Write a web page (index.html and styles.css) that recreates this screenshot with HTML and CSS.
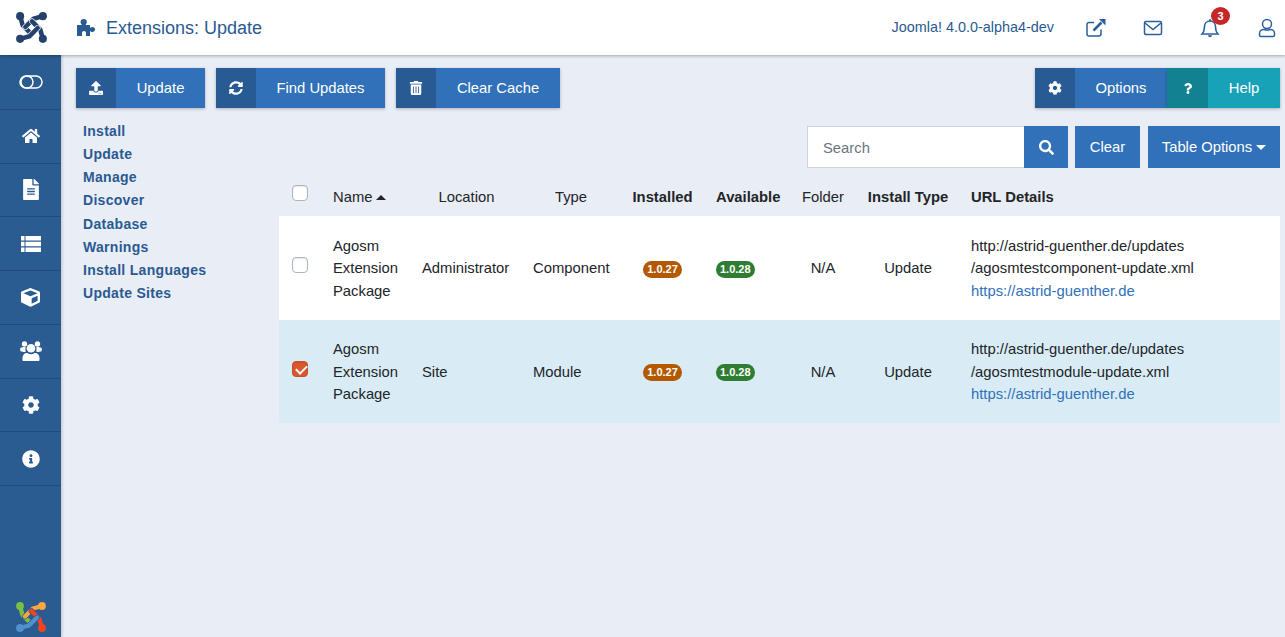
FILE: index.html
```html
<!DOCTYPE html>
<html lang="en">
<head>
    <meta charset="UTF-8">
    <title>Extensions: Update</title>
    <link rel="stylesheet" href="styles.css">
</head>
<body>
    <svg class="sprite" aria-hidden="true">
        <symbol id="i-home" viewBox="0 0 576 512"><path d="M280.37 148.26L96 300.11V464a16 16 0 0 0 16 16l112.06-.29a16 16 0 0 0 15.92-16V368a16 16 0 0 1 16-16h64a16 16 0 0 1 16 16v95.64a16 16 0 0 0 16 16.05L464 480a16 16 0 0 0 16-16V300L295.67 148.26a12.19 12.19 0 0 0-15.3 0zM571.6 251.47L488 182.56V44.05a12 12 0 0 0-12-12h-56a12 12 0 0 0-12 12v72.61L318.47 43a48 48 0 0 0-61 0L4.34 251.47a12 12 0 0 0-1.6 16.9l25.5 31A12 12 0 0 0 45.15 301l235.22-193.74a12.19 12.19 0 0 1 15.3 0L530.9 301a12 12 0 0 0 16.9-1.6l25.5-31a12 12 0 0 0-1.7-16.93z"/></symbol>
        <symbol id="i-file" viewBox="0 0 384 512"><path d="M224 136V0H24C10.7 0 0 10.7 0 24v464c0 13.3 10.7 24 24 24h336c13.3 0 24-10.7 24-24V160H248c-13.2 0-24-10.8-24-24zm64 236c0 6.6-5.4 12-12 12H108c-6.6 0-12-5.4-12-12v-8c0-6.6 5.4-12 12-12h168c6.6 0 12 5.4 12 12v8zm0-64c0 6.6-5.4 12-12 12H108c-6.6 0-12-5.4-12-12v-8c0-6.6 5.4-12 12-12h168c6.6 0 12 5.4 12 12v8zm0-72v8c0 6.6-5.4 12-12 12H108c-6.6 0-12-5.4-12-12v-8c0-6.6 5.4-12 12-12h168c6.6 0 12 5.4 12 12zm96-114.1v6.1H256V0h6.1c6.4 0 12.5 2.5 17 7l97.9 98c4.5 4.5 7 10.6 7 16.9z"/></symbol>
        <symbol id="i-list" viewBox="0 0 20 16"><path d="M0 0h3.500v4.600H0zM4.500 0H20v4.600H4.500zM0 5.700h3.500v4.600H0zM4.500 5.700H20v4.600H4.500zM0 11.400h3.500V16H0zM4.500 11.400H20V16H4.500z"/></symbol>
        <symbol id="i-cube" viewBox="0 0 512 512"><path d="M239.1 6.3l-208 78c-18.7 7-31.1 25-31.1 45v225.1c0 18.2 10.3 34.8 26.5 42.9l208 104c13.5 6.8 29.4 6.8 42.9 0l208-104c16.3-8.1 26.5-24.8 26.5-42.9V129.3c0-20-12.4-37.9-31.1-44.9l-208-78C262 2.2 250 2.2 239.1 6.3zM256 68.4l192 72v1.1l-192 78-192-78v-1.1l192-72zm32 356V275.5l160-65v133.9l-160 80z"/></symbol>
        <symbol id="i-users" viewBox="0 0 22 20"><circle cx="4.500" cy="3" r="2.700"/><circle cx="17.500" cy="3" r="2.700"/><circle cx="2.300" cy="8.500" r="2.300"/><circle cx="19.700" cy="8.500" r="2.300"/><circle cx="11" cy="7.200" r="4.300"/><path d="M3 6h2.500v5H3zM16.500 6H19v5h-2.500z"/><path d="M3.500 20c-.6 0-1-.4-1-1v-2c0-2.800 2-5 4-5h1c1 .8 2.200 1.200 3.500 1.200s2.500-.4 3.500-1.200h1c2 0 4 2.200 4 5v2c0 .6-.4 1-1 1z"/></symbol>
        <symbol id="i-cog" viewBox="0 0 512 512"><path d="M487.4 315.7l-42.6-24.6c4.3-23.2 4.3-47 0-70.2l42.6-24.6c4.9-2.8 7.1-8.6 5.5-14-11.1-35.6-30-67.8-54.7-94.6-3.8-4.1-10-5.1-14.8-2.3L380.8 110c-17.9-15.4-38.5-27.3-60.8-35.1V25.8c0-5.6-3.9-10.5-9.4-11.7-36.7-8.2-74.3-7.8-109.2 0-5.5 1.2-9.4 6.1-9.4 11.7V75c-22.2 7.9-42.8 19.8-60.8 35.1L88.7 85.5c-4.9-2.8-11-1.9-14.8 2.3-24.7 26.7-43.6 58.9-54.7 94.6-1.7 5.4.6 11.2 5.5 14L67.3 221c-4.3 23.2-4.3 47 0 70.2l-42.6 24.6c-4.9 2.8-7.1 8.6-5.5 14 11.1 35.6 30 67.8 54.7 94.6 3.8 4.1 10 5.1 14.8 2.3l42.6-24.6c17.9 15.4 38.5 27.3 60.8 35.1v49.2c0 5.6 3.9 10.5 9.4 11.7 36.7 8.2 74.3 7.8 109.2 0 5.5-1.2 9.4-6.1 9.4-11.7v-49.2c22.2-7.9 42.8-19.8 60.8-35.1l42.6 24.6c4.9 2.8 11 1.9 14.8-2.3 24.7-26.7 43.6-58.9 54.7-94.6 1.5-5.5-.7-11.3-5.6-14.1zM256 336c-44.1 0-80-35.9-80-80s35.9-80 80-80 80 35.9 80 80-35.9 80-80 80z"/></symbol>
        <symbol id="i-info" viewBox="0 0 512 512"><path d="M256 8C119.043 8 8 119.083 8 256c0 136.997 111.043 248 248 248s248-111.003 248-248C504 119.083 392.957 8 256 8zm0 110c23.196 0 42 18.804 42 42s-18.804 42-42 42-42-18.804-42-42 18.804-42 42-42zm56 254c0 6.627-5.373 12-12 12h-88c-6.627 0-12-5.373-12-12v-24c0-6.627 5.373-12 12-12h12v-64h-12c-6.627 0-12-5.373-12-12v-24c0-6.627 5.373-12 12-12h64c6.627 0 12 5.373 12 12v100h12c6.627 0 12 5.373 12 12v24z"/></symbol>
        <symbol id="i-search" viewBox="0 0 512 512"><path d="M505 442.7L405.3 343c-4.5-4.5-10.6-7-17-7H372c27.6-35.3 44-79.7 44-128C416 93.1 322.9 0 208 0S0 93.1 0 208s93.1 208 208 208c48.3 0 92.7-16.4 128-44v16.3c0 6.4 2.5 12.5 7 17l99.7 99.7c9.4 9.4 24.6 9.4 33.9 0l28.3-28.3c9.4-9.4 9.4-24.6.1-34zM208 336c-70.7 0-128-57.2-128-128 0-70.7 57.2-128 128-128 70.7 0 128 57.2 128 128 0 70.7-57.2 128-128 128z"/></symbol>
        <symbol id="i-trash" viewBox="0 0 448 512"><path d="M32 464a48 48 0 0 0 48 48h288a48 48 0 0 0 48-48V128H32zm272-256a16 16 0 0 1 32 0v224a16 16 0 0 1-32 0zm-96 0a16 16 0 0 1 32 0v224a16 16 0 0 1-32 0zm-96 0a16 16 0 0 1 32 0v224a16 16 0 0 1-32 0zM432 32H312l-9.4-18.7A24 24 0 0 0 281.1 0H166.8a23.72 23.72 0 0 0-21.4 13.3L136 32H16A16 16 0 0 0 0 48v32a16 16 0 0 0 16 16h416a16 16 0 0 0 16-16V48a16 16 0 0 0-16-16z"/></symbol>
        <symbol id="i-sync" viewBox="0 0 512 512"><path d="M370.72 133.28C339.458 104.008 298.888 87.962 255.848 88c-77.458.068-144.328 53.178-162.791 126.85-1.344 5.363-6.122 9.15-11.651 9.15H24.103c-7.498 0-13.194-6.807-11.807-14.176C33.933 94.924 134.813 8 256 8c66.448 0 126.791 26.136 171.315 68.685L463.03 40.97C478.149 25.851 504 36.559 504 57.941V192c0 13.255-10.745 24-24 24H345.941c-21.382 0-32.09-25.851-16.971-40.971l41.75-41.749zM32 296h134.059c21.382 0 32.09 25.851 16.971 40.971l-41.75 41.75c31.262 29.273 71.835 45.319 114.876 45.28 77.418-.07 144.315-53.144 162.787-126.849 1.344-5.363 6.122-9.15 11.651-9.15h57.304c7.498 0 13.194 6.807 11.807 14.176C478.067 417.076 377.187 504 256 504c-66.448 0-126.791-26.136-171.315-68.685L48.97 471.03C33.851 486.149 8 475.441 8 454.059V320c0-13.255 10.745-24 24-24z"/></symbol>
        <symbol id="i-upload" viewBox="0 0 512 512"><path d="M296 384h-80c-13.3 0-24-10.7-24-24V192h-87.7c-17.8 0-26.7-21.5-14.1-34.1L242.3 5.7c7.5-7.5 19.8-7.5 27.3 0l152.2 152.2c12.6 12.6 3.7 34.1-14.1 34.1H320v168c0 13.3-10.7 24-24 24zm216-8v112c0 13.3-10.7 24-24 24H24c-13.3 0-24-10.7-24-24V376c0-13.3 10.7-24 24-24h136v8c0 30.9 25.1 56 56 56h80c30.9 0 56-25.1 56-56v-8h136c13.3 0 24 10.7 24 24zm-124 88c0-11-9-20-20-20s-20 9-20 20 9 20 20 20 20-9 20-20zm64 0c0-11-9-20-20-20s-20 9-20 20 9 20 20 20 20-9 20-20z"/></symbol>
        <symbol id="i-puzzle" viewBox="0 0 18 17"><path d="M0 6h4.200c.5 0 .6-.4.3-.8C3.900 4.500 3.500 3.900 3.500 3c0-1.700 1.400-3 3.200-3s3.200 1.300 3.200 3c0 .9-.4 1.500-1 2.200-.3.400-.2.800.3.800H13v2.300c0 .5.400.6.800.3.500-.4 1-.6 1.600-.6 1.400 0 2.600 1.100 2.600 2.500s-1.200 2.500-2.600 2.500c-.6 0-1.100-.2-1.600-.6-.4-.3-.8-.2-.8.3V17H9v-3c0-1.100-.9-2-2-2s-2 .9-2 2v3H0z"/></symbol>
        <symbol id="i-question" viewBox="0 0 384 512"><path d="M202.021 0C122.202 0 70.503 32.703 29.914 91.026c-7.363 10.58-5.093 25.086 5.178 32.874l43.138 32.709c10.373 7.865 25.132 6.026 33.253-4.148 25.049-31.381 43.63-49.449 82.757-49.449 30.764 0 68.816 19.799 68.816 49.631 0 22.552-18.617 34.134-48.993 51.164-35.423 19.86-82.299 44.576-82.299 106.405V320c0 13.255 10.745 24 24 24h72.471c13.255 0 24-10.745 24-24v-5.773c0-42.86 125.268-44.645 125.268-160.627C377.504 66.256 286.902 0 202.021 0zM192 373.459c-38.196 0-69.271 31.075-69.271 69.271 0 38.195 31.075 69.27 69.271 69.27s69.271-31.075 69.271-69.271-31.075-69.27-69.271-69.27z"/></symbol>
        <symbol id="i-joomla" viewBox="0 0 30 30">
            <g fill="none" stroke-linecap="round" stroke-linejoin="round">
                <path class="j-gap" d="M4 4l2.500 9 8 8"/>
                <path class="j-a" d="M4 4l2.500 9 8 8"/>
                <path class="j-gap" d="M26 4l-9 2.500-8 8"/>
                <path class="j-b" d="M26 4l-9 2.500-8 8"/>
                <path class="j-gap" d="M26 26l-2.500-9-8-8"/>
                <path class="j-c" d="M26 26l-2.500-9-8-8"/>
                <path class="j-gap" d="M4 26l9-2.500 8-8"/>
                <path class="j-d" d="M4 26l9-2.500 8-8"/>
            </g>
            <circle class="j-a-f" cx="4" cy="4" r="3.900"/>
            <circle class="j-b-f" cx="26" cy="4" r="3.900"/>
            <circle class="j-c-f" cx="26" cy="26" r="3.900"/>
            <circle class="j-d-f" cx="4" cy="26" r="3.900"/>
        </symbol>
    </svg>

    <header class="topbar">
        <a class="brand"><svg class="brand-logo"><use href="#i-joomla"/></svg></a>
        <svg class="title-icon"><use href="#i-puzzle"/></svg>
        <h1 class="page-title">Extensions: Update</h1>
        <div class="top-right">
            <span class="version">Joomla! 4.0.0-alpha4-dev</span>
            <a class="top-link">
                <svg viewBox="0 0 20 20" class="line-icon"><path d="M15 11.500v4.500a2 2 0 0 1-2 2H3a2 2 0 0 1-2-2V6.500a2 2 0 0 1 2-2h5"/><path d="M7.500 12.500L15.500 4.500" stroke-width="2.500"/><path class="solid" d="M13 1h6.500v6.500z"/></svg>
            </a>
            <a class="top-link">
                <svg viewBox="0 0 20 20" class="line-icon"><rect x="1.500" y="3.500" width="17" height="13" rx="1.500"/><path d="M2 5l8 6.500L18 5"/></svg>
            </a>
            <a class="top-link">
                <svg viewBox="0 0 20 20" class="line-icon"><path d="M2 16c2-2 2.500-3.500 2.500-7.500C4.500 5 7 3 10 3s5.500 2 5.500 5.500c0 4 .5 5.500 2.500 7.500z"/><path class="solid" d="M8 17.200h4a2 2 0 0 1-4 0zM9 1.200h2V3H9z"/></svg>
                <span class="notify">3</span>
            </a>
            <a class="top-link">
                <svg viewBox="0 0 20 20" class="line-icon"><circle cx="10" cy="6" r="4.500"/><path d="M4 18.500a1.500 1.500 0 0 1-1.500-1.500v-1.500c0-2.500 2-4 4-4 1 0 2 .6 3.500.6s2.500-.6 3.500-.6c2 0 4 1.500 4 4V17a1.500 1.500 0 0 1-1.500 1.500z"/></svg>
            </a>
        </div>
    </header>

    <div class="page">
        <nav class="sidebar">
            <a class="side-item"><svg class="toggle" viewBox="0 0 24 14"><rect x="1" y="1" width="22" height="12" rx="6"/><circle cx="8" cy="7" r="6"/></svg></a>
            <a class="side-item"><svg class="icon-home"><use href="#i-home"/></svg></a>
            <a class="side-item"><svg class="icon-file"><use href="#i-file"/></svg></a>
            <a class="side-item"><svg class="icon-list"><use href="#i-list"/></svg></a>
            <a class="side-item"><svg class="icon-cube"><use href="#i-cube"/></svg></a>
            <a class="side-item"><svg class="icon-users"><use href="#i-users"/></svg></a>
            <a class="side-item"><svg class="icon-cog"><use href="#i-cog"/></svg></a>
            <a class="side-item"><svg class="icon-cog"><use href="#i-info"/></svg></a>
            <svg class="side-logo"><use href="#i-joomla"/></svg>
        </nav>

        <main class="main">
            <div class="toolbar">
                <a class="btn btn-update"><span class="btn-icon"><svg><use href="#i-upload"/></svg></span><span class="btn-text">Update</span></a>
                <a class="btn btn-find"><span class="btn-icon"><svg><use href="#i-sync"/></svg></span><span class="btn-text">Find Updates</span></a>
                <a class="btn btn-cache"><span class="btn-icon"><svg><use href="#i-trash"/></svg></span><span class="btn-text">Clear Cache</span></a>
                <a class="btn btn-options"><span class="btn-icon"><svg><use href="#i-cog"/></svg></span><span class="btn-text">Options</span></a>
                <a class="btn btn-help"><span class="btn-icon"><svg><use href="#i-question"/></svg></span><span class="btn-text">Help</span></a>
            </div>

            <div class="content">
                <ul class="submenu">
                    <li>Install</li>
                    <li>Update</li>
                    <li>Manage</li>
                    <li>Discover</li>
                    <li>Database</li>
                    <li>Warnings</li>
                    <li>Install Languages</li>
                    <li>Update Sites</li>
                </ul>

                <div class="list-area">
                    <div class="filters">
                        <div class="search-box">
                            <input class="search-input" type="text" placeholder="Search">
                            <button class="search-btn"><svg><use href="#i-search"/></svg></button>
                        </div>
                        <button class="filter-btn btn-clear">Clear</button>
                        <button class="filter-btn btn-table">Table Options<span class="caret"></span></button>
                    </div>

                    <table class="updates">
                        <thead>
                            <tr>
                                <th class="col-check"><input type="checkbox" class="check"></th>
                                <th class="col-name left">Name<span class="caret-up"></span></th>
                                <th class="col-location">Location</th>
                                <th class="col-type">Type</th>
                                <th class="col-installed strong">Installed</th>
                                <th class="col-available strong">Available</th>
                                <th class="col-folder">Folder</th>
                                <th class="col-itype strong">Install Type</th>
                                <th class="col-url strong left">URL Details</th>
                            </tr>
                        </thead>
                        <tbody>
                            <tr>
                                <td><input type="checkbox" class="check"></td>
                                <td>Agosm Extension Package</td>
                                <td>Administrator</td>
                                <td>Component</td>
                                <td class="center"><span class="badge badge-old">1.0.27</span></td>
                                <td><span class="badge badge-new">1.0.28</span></td>
                                <td class="center">N/A</td>
                                <td class="center">Update</td>
                                <td>http://astrid-guenther.de/updates<br>/agosmtestcomponent-update.xml<br><a class="link">https://astrid-guenther.de</a></td>
                            </tr>
                            <tr class="selected">
                                <td><input type="checkbox" class="check" checked></td>
                                <td>Agosm Extension Package</td>
                                <td>Site</td>
                                <td>Module</td>
                                <td class="center"><span class="badge badge-old">1.0.27</span></td>
                                <td><span class="badge badge-new">1.0.28</span></td>
                                <td class="center">N/A</td>
                                <td class="center">Update</td>
                                <td>http://astrid-guenther.de/updates<br>/agosmtestmodule-update.xml<br><a class="link">https://astrid-guenther.de</a></td>
                            </tr>
                        </tbody>
                    </table>
                </div>
            </div>
        </main>
    </div>
</body>
</html>
```

FILE: styles.css
```css
* { box-sizing: border-box; }
html, body { height: 100%; }
body { margin: 0; background-color: #e9edf5; color: #212529; font-family: "Liberation Sans", sans-serif; font-size: 14.8px; line-height: 22.5px; overflow: hidden; display: flex; flex-direction: column; }
svg { fill: currentColor; }
.sprite { display: none; }

/* joomla logo, the same drawing in two colourings */
.j-a, .j-b, .j-c, .j-d { stroke-width: 4.400; }
.j-gap { stroke-width: 5.600; stroke: var(--j-gap); }
.j-a { stroke: var(--j-a); }
.j-b { stroke: var(--j-b); }
.j-c { stroke: var(--j-c); }
.j-d { stroke: var(--j-d); }
.j-a-f { fill: var(--j-a); }
.j-b-f { fill: var(--j-b); }
.j-c-f { fill: var(--j-c); }
.j-d-f { fill: var(--j-d); }
.brand-logo { width: 31px; height: 31px; margin-left: 1px; --j-gap: #fff; --j-a: #24426b; --j-b: #24426b; --j-c: #24426b; --j-d: #24426b; }
.side-logo { width: 30px; height: 30px; margin: auto auto 5px; --j-gap: #2a5b91; --j-a: #7ac143; --j-b: #f9a541; --j-c: #f44321; --j-d: #5091cd; }

/* top bar */
.topbar { height: 55px; flex: none; background-color: #fff; box-shadow: 0 1px 3px rgba(0,0,0,0.3); display: flex; align-items: center; position: relative; z-index: 2; color: #2a5a92; }
.brand { width: 61px; display: flex; justify-content: center; }
.title-icon { width: 18px; height: 17px; margin-left: 16px; margin-right: 11px; }
.page-title { margin: 0; padding-top: 1px; font-size: 18px; font-weight: 400; }
.top-right { margin-left: auto; display: flex; align-items: center; gap: 21px; }
.version { font-size: 14.400px; margin-right: 3px; }
.top-link { width: 36px; height: 40px; display: flex; align-items: center; justify-content: center; position: relative; }
.line-icon { width: 20px; height: 20px; fill: none; stroke: #2a5f9e; stroke-width: 1.500; }
.line-icon .solid { fill: #2a5f9e; stroke: none; }
.notify { position: absolute; top: -1px; left: 19px; width: 19px; height: 18px; border-radius: 50%; background-color: #c52827; color: #fff; font-size: 11px; font-weight: 700; line-height: 18px; text-align: center; }

/* sidebar */
.page { flex: 1; display: flex; min-height: 0; }
.sidebar { width: 61px; flex: none; padding-top: 1px; background-color: #2a5b91; color: #fff; display: flex; flex-direction: column; box-shadow: 1px 0 3px rgba(0,0,0,0.2); }
.side-item { height: 53.750px; flex: none; border-bottom: 1px solid #24497a; display: flex; align-items: center; justify-content: center; }
.icon-home { width: 18px; height: 16px; }
.icon-file { width: 18px; height: 21px; }
.icon-list { width: 20px; height: 16px; }
.icon-cube { width: 19px; height: 19px; }
.icon-users { width: 22px; height: 20px; }
.icon-cog { width: 18px; height: 18px; }
.toggle { width: 24px; height: 14px; fill: none; stroke: #fff; stroke-width: 1.500; }

/* toolbar */
.main { flex: 1; min-width: 0; padding: 13px 5px 0 15px; }
.toolbar { display: flex; height: 40px; gap: 11px; }
.btn { display: flex; background-color: #3071b9; color: #fff; box-shadow: 0 1px 3px rgba(0,0,0,0.25); }
.btn-icon { width: 40px; display: flex; align-items: center; justify-content: center; background-color: #285a94; }
.btn-icon svg { width: 14px; height: 14px; }
.btn-text { flex: 1; text-align: center; line-height: 40px; }
.btn-update { width: 129px; }
.btn-find { width: 169px; }
.btn-cache { width: 164px; }
.btn-options { width: 132px; margin-left: auto; }
.btn-help { width: 113px; margin-left: -11px; background-color: #17a2b8; }
.btn-help .btn-icon { width: 41px; background-color: #128293; }
.btn-help .btn-icon svg { height: 11px; }

/* submenu */
.content { display: flex; }
.submenu { width: 203px; flex: none; margin: 0; padding: 11.700px 0 0 7px; list-style: none; font-size: 14px; font-weight: 700; line-height: 23.250px; letter-spacing: 0.3px; color: #2a5a92; }

/* filters */
.list-area { flex: 1; min-width: 0; }
.filters { display: flex; justify-content: flex-end; margin-top: 18px; height: 42px; }
.search-box { display: flex; margin-right: 7px; }
.search-input { width: 217px; height: 42px; padding: 1px 15px 0; border: 1px solid #ced4da; border-right: 0; background-color: #fff; font: inherit; color: #212529; }
.search-input::placeholder { color: #6c757d; opacity: 1; }
.search-btn { width: 44px; border: 0; background-color: #3071b9; color: #fff; display: flex; align-items: center; justify-content: center; padding: 0; }
.search-btn svg { width: 15px; height: 15px; }
.filter-btn { border: 0; background-color: #3071b9; color: #fff; font: inherit; padding: 1px 0 0; }
.btn-clear { width: 65px; margin-right: 8px; }
.btn-table { width: 132px; }
.caret { display: inline-block; margin-left: 4px; border-top: 5px solid #fff; border-left: 5px solid transparent; border-right: 5px solid transparent; vertical-align: 2px; }

/* table */
.updates { width: 100%; table-layout: fixed; border-collapse: collapse; margin-top: 8px; }
.updates th { height: 40px; padding: 2px 11px 0; font-weight: 400; text-align: center; white-space: nowrap; }
.updates th.strong { font-weight: 700; }
.updates th.left { text-align: left; }
.updates td { padding: 18.500px 11px 17.500px; vertical-align: middle; background-color: #fff; }
.updates .selected td { background-color: #d9ecf5; }
.updates td.center { text-align: center; }
.col-check { width: 43px; }
.col-name { width: 89px; }
.col-location { width: 111px; }
.col-type { width: 98px; }
.col-installed { width: 85px; }
.col-available { width: 85px; }
.col-folder { width: 66px; }
.col-itype { width: 104px; }
.caret-up { display: inline-block; margin-left: 4px; border-bottom: 5px solid #212529; border-left: 5px solid transparent; border-right: 5px solid transparent; vertical-align: 2px; }
.check { appearance: none; width: 16px; height: 16px; display: block; margin: 0 0 0 2px; border: 1px solid #adb5bd; border-radius: 4px; background-color: #fff; position: relative; top: -3px; box-shadow: inset 0 1px 2px rgba(0,0,0,0.1); }
th .check { top: -4px; }
.check:checked { border-color: #c9502a; background-color: #d9582d; }
.check:checked::after { content: ""; position: absolute; left: 4.500px; top: 1px; width: 5px; height: 9px; border: solid #fff; border-width: 0 2px 2px 0; transform: rotate(45deg); }
.badge { display: inline-block; height: 17px; padding: 0 4px; border-radius: 9px; color: #fff; font-size: 11px; font-weight: 700; line-height: 17px; vertical-align: middle; }
.badge-old { background-color: #b35900; }
.badge-new { background-color: #2e7d32; }
.link { color: #3071b9; }
```
